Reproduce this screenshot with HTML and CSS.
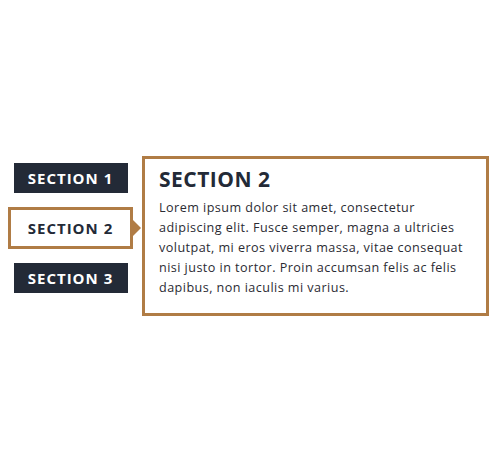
FILE: index.html
```html
<!DOCTYPE html>
<html lang="en">
<head>
<meta charset="utf-8">
<title>Sections</title>
<link rel="stylesheet" href="styles.css">
</head>
<body>
  <div class="tabs">
    <nav class="tab-list">
      <button class="tab">SECTION 1</button>
      <button class="tab tab--active">SECTION 2</button>
      <button class="tab">SECTION 3</button>
    </nav>
    <section class="panel">
      <h2 class="panel-title">SECTION 2</h2>
      <p class="panel-text">Lorem ipsum dolor sit amet, consectetur adipiscing elit. Fusce semper, magna a ultricies volutpat, mi eros viverra massa, vitae consequat nisi justo in tortor. Proin accumsan felis ac felis dapibus, non iaculis mi varius.</p>
    </section>
  </div>
</body>
</html>
```

FILE: styles.css
```css
html, body {
  margin: 0;
  height: 100%;
  background: #ffffff;
}

body {
  padding: 0 8px;
  box-sizing: border-box;
  display: flex;
  align-items: center;
  font-family: "Open Sans", "Noto Sans", sans-serif;
  color: #27272f;
}

.tabs {
  display: flex;
  align-items: flex-start;
  gap: 9px;
}

.tab-list {
  width: 125px;
  padding-top: 7px;
  display: flex;
  flex-direction: column;
  align-items: center;
  gap: 14px;
}

.tab {
  position: relative;
  width: 114px;
  height: 30px;
  border: 0;
  padding: 0;
  background: #232a37;
  color: #ffffff;
  font-family: inherit;
  font-size: 15px;
  font-weight: 700;
  letter-spacing: 1px;
}

.tab--active {
  width: 125px;
  height: 42px;
  background: #ffffff;
  color: #232a37;
  border: 3px solid #b07c45;
}

/* pointer from the active tab toward the panel */
.tab--active::after {
  content: "";
  position: absolute;
  top: 50%;
  right: -11px;
  margin-top: -8px;
  border-style: solid;
  border-width: 8px 0 8px 8px;
  border-color: transparent transparent transparent #b07c45;
}

.panel {
  width: 347px;
  height: 160px;
  box-sizing: border-box;
  border: 3px solid #b07c45;
  padding: 6px 14px;
}

.panel-title {
  margin: 0 0 5px;
  font-size: 21px;
  line-height: 28px;
  font-weight: 700;
  letter-spacing: 0.5px;
  color: #232a37;
}

.panel-text {
  margin: 0;
  font-size: 12.6px;
  line-height: 20px;
  letter-spacing: 0.45px;
  color: #2b2b33;
}
```
